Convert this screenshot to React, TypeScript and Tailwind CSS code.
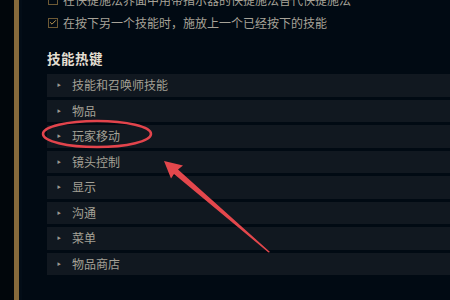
import { Check } from "lucide-react";

const HOTKEY_GROUPS = [
  "技能和召唤师技能",
  "物品",
  "玩家移动",
  "镜头控制",
  "显示",
  "沟通",
  "菜单",
  "物品商店",
];

function OptionLine({ checked, label }: { checked: boolean; label: string }) {
  return (
    <div className="flex h-[23px] items-center gap-[5px] pl-[1px]">
      <span className="flex h-[10px] w-[10px] shrink-0 items-center justify-center border border-[#6e5a35]">
        {checked && <Check className="h-[9px] w-[9px] text-[#b8944f]" strokeWidth={3} />}
      </span>
      <span className="whitespace-nowrap text-[12px] text-[#a7a398]">{label}</span>
    </div>
  );
}

function GroupRow({ label }: { label: string }) {
  return (
    <div className="flex h-[22.5px] items-center bg-[#111820]">
      <span className="ml-[10px] text-[4px] leading-none text-[#9a9890]">▶</span>
      <span className="ml-[11px] text-[12px] text-[#a4a196]">{label}</span>
    </div>
  );
}

export default function App() {
  return (
    <div
      className="relative flex h-[300px] w-[450px] overflow-hidden bg-[#010a13]"
      style={{ fontFamily: '"Noto Sans CJK SC", "Noto Sans", sans-serif' }}
    >
      <div className="w-[14px] shrink-0 bg-[#01060b]" />
      <div className="w-[5px] shrink-0 bg-[#86693b]" />
      <div className="w-[3px] shrink-0 bg-[#030d17]" />
      <div className="flex flex-1 flex-col pl-[25px]">
        <div className="-mt-[12px]">
          <OptionLine checked={false} label="在快捷施法界面中用带指示器的快捷施法替代快捷施法" />
          <OptionLine checked label="在按下另一个技能时，施放上一个已经按下的技能" />
        </div>
        <h2 className="mt-[14px] flex h-[20px] items-center text-[13.5px] font-bold tracking-[0.5px] text-[#e4dfd2]">
          技能热键
        </h2>
        <div className="mt-[6px] flex flex-col gap-[3px]">
          {HOTKEY_GROUPS.map((g) => (
            <GroupRow key={g} label={g} />
          ))}
        </div>
      </div>

      {/* red annotation drawn over the screenshot */}
      <svg className="pointer-events-none absolute inset-0" width="450" height="300" viewBox="0 0 450 300">
        <ellipse cx="97" cy="134" rx="54" ry="13" fill="none" stroke="#e2444c" strokeWidth="2.5" />
        <polygon points="164,161 183,165.5 178,169.5 270,252 268.5,252.5 174,174 171,178.5" fill="#e4474c" />
      </svg>
    </div>
  );
}
